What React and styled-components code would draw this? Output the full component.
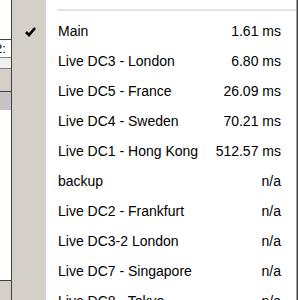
import React from "react";
import styled, { createGlobalStyle } from "styled-components";

const Global = createGlobalStyle`
  html, body { margin: 0; padding: 0; background: #fff; }
  body { width: 300px; height: 300px; overflow: hidden; }
`;

const Screen = styled.div`display:flex; width:300px; height:300px; overflow:hidden; font-family:"Liberation Sans", Arial, sans-serif;`;

/* window behind the menu, only a sliver shows */
const Behind = styled.div`width:11px; display:flex; flex-direction:column; flex-shrink:0;`;
const Band = styled.div`
  height:${p => p.h}px; background:${p => p.bg || "#fff"};
  border-bottom:${p => (p.line ? `1px solid ${p.line}` : "none")};
  font-size:13px; line-height:${p => p.h}px; overflow:hidden; white-space:nowrap; color:#000;
  ${p => p.grow && "flex:1;"}
`;
const Cut = styled.span`display:inline-block; margin-left:-5px;`;

const Menu = styled.div`
  width:285px; flex-shrink:0; background:#fff;
  border-left:1px solid #404040; border-right:1px solid #404040;
  box-shadow:inset -1px 0 0 #a0a0a0;
  display:flex; flex-direction:column;
`;
const Row = styled.div`
  display:grid; grid-template-columns:34px 1fr auto; align-items:center;
  height:${p => p.h || 30}px; flex-shrink:0;
  font-size:14px; color:#000;
`;
const Gutter = styled.div`height:100%; background:#d4d0c8; display:flex; align-items:center; justify-content:center;`;
const Label = styled.div`padding-left:12px; white-space:nowrap;`;
const Value = styled.div`padding-right:16px; text-align:right; white-space:nowrap;`;
const Sep = styled.div`grid-column:2 / 4; margin-left:11px; margin-right:1px; height:2px; background:#e2e2e2; align-self:start; margin-top:9px;`;

const Check = () => (
  <svg width="11" height="10" viewBox="0 0 11 10" style={{ marginTop: 2, marginLeft: 2 }}>
    <path d="M1 5 L4 8 L10 1" fill="none" stroke="#000" strokeWidth="2.6" />
  </svg>
);

const servers = [
  ["Main", "1.61 ms", true],
  ["Live DC3 - London", "6.80 ms"],
  ["Live DC5 - France", "26.09 ms"],
  ["Live DC4 - Sweden", "70.21 ms"],
  ["Live DC1 - Hong Kong", "512.57 ms"],
  ["backup", "n/a"],
  ["Live DC2 - Frankfurt", "n/a"],
  ["Live DC3-2 London", "n/a"],
  ["Live DC7 - Singapore", "n/a"],
  ["Live DC8 - Tokyo", "n/a"],
];

export default function App() {
  return (
    <>
      <Global />
      <Screen>
        <Behind>
          <Band h={39} line="#404040" />
          <Band h={17} line="#808080"><Cut>2:</Cut></Band>
          <Band h={10} bg="#f0f0f0" line="#808080" />
          <Band h={22} bg="#d4d0c8" line="#404040" />
          <Band h={18} bg="#c4c4c4" />
          <Band h={170} line="#404040" />
          <Band grow bg="#d4d0c8" />
        </Behind>
        <Menu>
          <Row h={16}>
            <Gutter />
            <Sep />
          </Row>
          {servers.map(([name, ms, on]) => (
            <Row key={name}>
              <Gutter>{on && <Check />}</Gutter>
              <Label>{name}</Label>
              <Value>{ms}</Value>
            </Row>
          ))}
        </Menu>
      </Screen>
    </>
  );
}
